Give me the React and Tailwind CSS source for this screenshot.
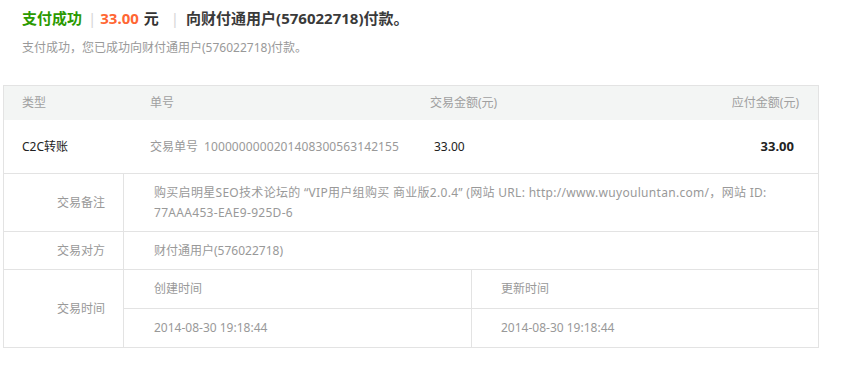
import React from "react";

const font = { fontFamily: '"Noto Sans", "Noto Sans CJK SC", sans-serif' };

export default function App() {
  return (
    <div className="w-[848px] h-[384px] bg-white pl-[3px] pt-[7px] text-[12px] text-[#333]" style={font}>
      <div className="pl-[19px] flex items-center h-[23px] text-[15px] font-bold leading-[23px]">
        <span className="text-[#2b9a00]">支付成功</span>
        <span className="text-[#d6d6d6] font-normal ml-[6px] mr-[4px]">|</span>
        <span className="text-[#ff6633]">33.00</span>
        <span className="ml-[5px] text-[#333]">元</span>
        <span className="text-[#d6d6d6] font-normal ml-[12px] mr-[7px]">|</span>
        <span className="text-[#3a3a3a]">向财付通用户(576022718)付款。</span>
      </div>
      <div className="pl-[19px] mt-[8px] h-[20px] leading-[20px] text-[#999]">
        支付成功，您已成功向财付通用户(576022718)付款。
      </div>
      <div className="mt-[27px] w-[816px] border border-[#e3e3e3]">
        <div className="flex items-center h-[34px] bg-[#f3f5f4] text-[#a0a0a0]">
          <div className="w-[146px] pl-[18px]">类型</div>
          <div className="w-[280px]">单号</div>
          <div className="flex-1">交易金额(元)</div>
          <div className="pr-[19px]">应付金额(元)</div>
        </div>
        <div className="flex items-center h-[54px] border-b border-[#e3e3e3]">
          <div className="w-[146px] pl-[18px] text-[#222]">C2C转账</div>
          <div className="w-[280px] text-[#999] whitespace-nowrap">
            交易单号<span className="ml-[6px] tracking-[0.1px]">1000000000201408300563142155</span>
          </div>
          <div className="flex-1 pl-[4px] text-[#222]">33.00</div>
          <div className="pr-[24px] font-bold text-[#222] text-[13px]">33.00</div>
        </div>
        <div className="flex border-b border-[#e3e3e3]">
          <div className="w-[120px] border-r border-[#e3e3e3] flex items-center justify-end pr-[18px] text-[#999]">交易备注</div>
          <div className="flex-1 pl-[30px] pr-[24px] pt-[9px] pb-[8px] leading-[20px] text-[#999] min-h-[57px] break-words tracking-[0.3px]">
            购买启明星SEO技术论坛的 “VIP用户组购买 商业版2.0.4” (网站 URL: http://www.wuyouluntan.com/，网站 ID: 77AAA453-EAE9-925D-6
          </div>
        </div>
        <div className="flex h-[38px] border-b border-[#e3e3e3]">
          <div className="w-[120px] border-r border-[#e3e3e3] flex items-center justify-end pr-[18px] text-[#999]">交易对方</div>
          <div className="flex-1 pl-[30px] flex items-center text-[#999]">财付通用户(576022718)</div>
        </div>
        <div className="flex">
          <div className="w-[120px] border-r border-[#e3e3e3] flex items-center justify-end pr-[18px] text-[#999]">交易时间</div>
          <div className="flex-1 flex flex-col">
            <div className="flex h-[39px] border-b border-[#e3e3e3] text-[#999]">
              <div className="w-[348px] border-r border-[#e3e3e3] pl-[30px] flex items-center">创建时间</div>
              <div className="flex-1 pl-[29px] flex items-center">更新时间</div>
            </div>
            <div className="flex h-[38px] text-[#999]">
              <div className="w-[348px] border-r border-[#e3e3e3] pl-[30px] flex items-center">2014-08-30 19:18:44</div>
              <div className="flex-1 pl-[29px] flex items-center">2014-08-30 19:18:44</div>
            </div>
          </div>
        </div>
      </div>
    </div>
  );
}
